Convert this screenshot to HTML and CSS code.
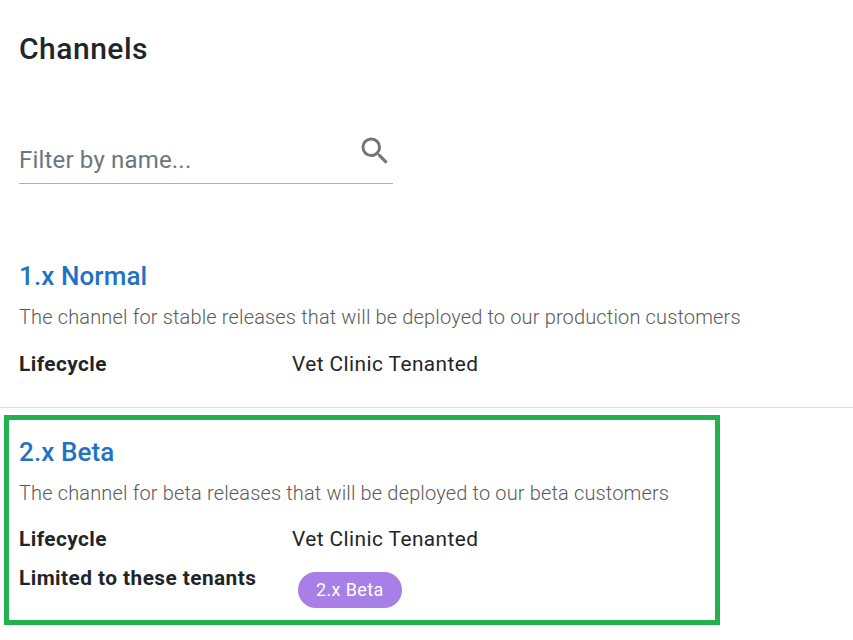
FILE: index.html
```html
<!DOCTYPE html>
<html lang="en">
<head>
    <meta charset="UTF-8">
    <title>Channels</title>
    <link rel="stylesheet" href="styles.css">
</head>
<body>

<div class="page">
    <h2 class="page-title">Channels</h2>
    <div class="filter">
        <span class="filter-text">Filter by name...</span>
        <svg class="filter-icon" width="36" height="36" viewBox="0 0 24 24">
            <path fill="#757575" d="M15.5 14h-.79l-.28-.27A6.471 6.471 0 0 0 16 9.5 6.5 6.5 0 1 0 9.5 16c1.61 0 3.09-.59 4.23-1.57l.27.28v.79l5 4.99L20.49 19l-4.99-5zm-6 0C7.01 14 5 11.99 5 9.5S7.01 5 9.5 5 14 7.01 14 9.5 11.99 14 9.5 14z"/>
        </svg>
    </div>

    <div class="channel channel-first">
        <h3 class="channel-name">1.x Normal</h3>
        <p class="channel-desc">The channel for stable releases that will be deployed to our production customers</p>
        <div class="row">
            <span class="row-label">Lifecycle</span>
            <span class="row-value">Vet Clinic Tenanted</span>
        </div>
    </div>

    <div class="channel channel-marked">
        <h3 class="channel-name">2.x Beta</h3>
        <p class="channel-desc">The channel for beta releases that will be deployed to our beta customers</p>
        <div class="row row-lifecycle">
            <span class="row-label">Lifecycle</span>
            <span class="row-value">Vet Clinic Tenanted</span>
        </div>
        <div class="row row-tenants">
            <span class="row-label">Limited to these tenants</span>
            <span class="tag">2.x Beta</span>
        </div>
    </div>
</div>

</body>
</html>
```

FILE: styles.css
```css
body {
    margin: 0;
    font-family: Roboto, "Liberation Sans", sans-serif;
    color: #212529;
    background: #ffffff;
    overflow: hidden;
}
.page-title {
    margin: 0;
    padding: 32px 0 0 19px;
    font-size: 30px;
    line-height: 34px;
    font-weight: 500;
    letter-spacing: 0.5px;
}
.filter {
    position: relative;
    width: 374px;
    height: 48px;
    margin: 69px 0 0 19px;
    border-bottom: 1px solid #aeb0bb;
}
.filter-text {
    display: block;
    padding-top: 12px;
    font-size: 24px;
    line-height: 26px;
    letter-spacing: 0.18px;
    color: #6c757d;
}
.filter-icon {
    position: absolute;
    right: 0;
    top: -2px;
}
.channel-first {
    margin-top: 75px;
    height: 148px;
    padding-left: 19px;
    border-bottom: 1px solid #dedede;
}
.channel-marked {
    width: 716px;
    height: 210px;
    margin: 7px 0 0 4px;
    padding: 15px 0 0 10px;
    border: 5px solid #22b14c;
    box-sizing: border-box;
}
.channel-name {
    margin: 0;
    font-size: 26px;
    line-height: 34px;
    font-weight: 500;
    letter-spacing: 0.1px;
    color: #1f72c4;
}
.channel-desc {
    margin: 10px 0 0;
    font-size: 20px;
    line-height: 28px;
    font-weight: 300;
    letter-spacing: 0.15px;
    color: #5a5a5a;
}
.row {
    display: flex;
    margin-top: 19px;
    font-size: 20.8px;
    line-height: 28px;
    letter-spacing: 0.45px;
}
.row-label {
    width: 273px;
    font-weight: 700;
}
.row-lifecycle {
    margin-top: 18px;
}
.row-tenants {
    margin-top: 11px;
}
.tag {
    margin: 8px 0 0 6px;
    padding: 0 18px;
    height: 36px;
    line-height: 36px;
    font-size: 18px;
    letter-spacing: 0.38px;
    color: #ffffff;
    background: #a77fe6;
    border-radius: 18px;
}
```
